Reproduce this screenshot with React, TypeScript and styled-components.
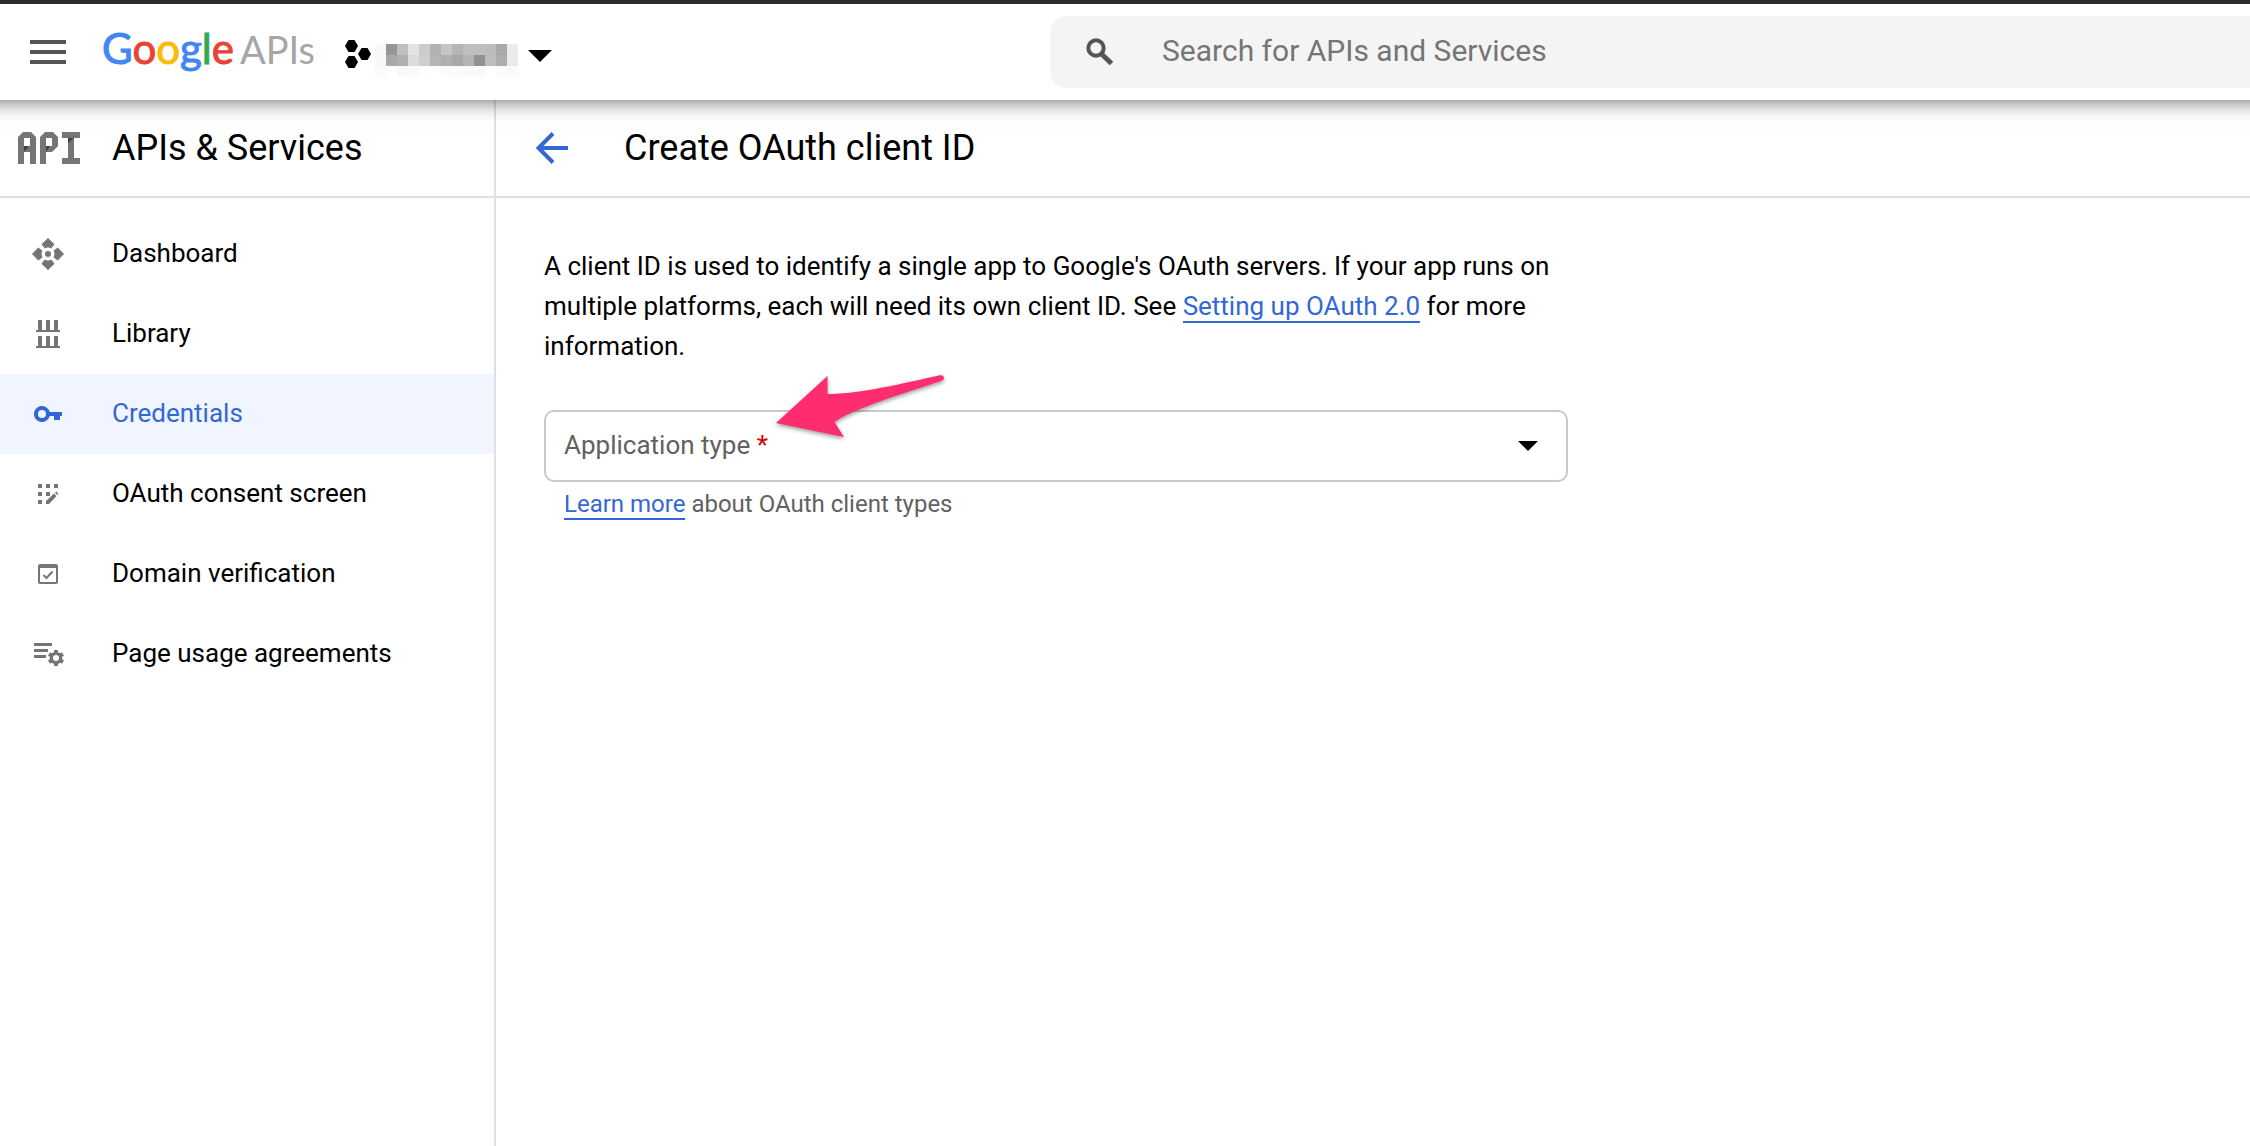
import React from "react";
import styled, { createGlobalStyle } from "styled-components";

const GlobalStyle = createGlobalStyle`
  *, *::before, *::after { box-sizing: border-box; }
  body {
    margin: 0;
    background: #fff;
    color: #000;
    font-family: Roboto, "Noto Sans", sans-serif;
    font-size: 26px;
    line-height: 40px;
  }
  button { border: 0; padding: 0; background: none; color: inherit; font: inherit; cursor: pointer; }
  svg { display: block; flex: none; }
`;

const Page = styled.div`
  display: flex;
  flex-direction: column;
  min-height: 100vh;
  overflow-x: clip;
`;

const Header = styled.header`
  position: relative;
  z-index: 1;
  display: grid;
  grid-template-columns: 7fr 8fr;
  align-items: center;
  height: 100px;
  border-top: 4px solid #2c2a32;
  background: #fff;
  box-shadow: 0 -20px 20px 20px rgba(0, 0, 0, 0.65);
`;

const HeaderStart = styled.div`
  display: flex;
  align-items: center;
  padding-left: 30px;
`;

const Logo = styled.a`
  display: flex;
  align-items: baseline;
  gap: 6px;
  margin: 0 30px 8px 36px;
  font-family: Lato, sans-serif;
  font-size: 42px;
  line-height: 48px;
  text-decoration: none;
`;

const Letter = styled.span<{ $color: string }>`
  color: ${(p) => p.$color};
  -webkit-text-stroke: 1px ${(p) => p.$color};
`;

const LogoSuffix = styled.span`
  color: #a6a6a6;
  font-size: 38px;
`;

const ProjectPicker = styled.button`
  display: flex;
  align-items: center;
`;

const SearchBar = styled.label`
  display: flex;
  align-items: center;
  gap: 48px;
  height: 72px;
  padding-left: 36px;
  border-radius: 16px 0 0 16px;
  background: #f4f4f4;
`;

const SearchInput = styled.input`
  flex: 1;
  min-width: 0;
  height: 68px;
  padding: 0 0 4px;
  border: 0;
  outline: 0;
  background: transparent;
  color: #333;
  font: 30px Roboto, sans-serif;
  &::placeholder { color: #757575; opacity: 1; }
`;

const Body = styled.div`
  display: flex;
  flex: 1;
`;

const Sidebar = styled.aside`
  flex: none;
  width: 496px;
  border-right: 2px solid #e0e0e0;
`;

const Main = styled.main`
  flex: 1;
  min-width: 0;
`;

const TitleBar = styled.div<{ $inset: number; $gap: number }>`
  display: flex;
  align-items: center;
  gap: ${(p) => p.$gap}px;
  height: 98px;
  padding-left: ${(p) => p.$inset}px;
  border-bottom: 2px solid #e0e0e0;
`;

const Title = styled.h1`
  margin: 0;
  font-size: 36px;
  font-weight: 400;
  line-height: 48px;
`;

const NavList = styled.ul`
  margin: 0;
  padding: 16px 0;
  list-style: none;
`;

const NavLink = styled.a<{ $active: boolean }>`
  display: flex;
  align-items: center;
  gap: 44px;
  height: 80px;
  padding-left: 28px;
  background: ${(p) => (p.$active ? "#f0f5ff" : "transparent")};
  color: ${(p) => (p.$active ? "#3367d6" : "#000")};
  text-decoration: none;
  svg { color: ${(p) => (p.$active ? "#3367d6" : "#757575")}; }
`;

const NavLabel = styled.span`
  padding-bottom: 2px;
`;

const Content = styled.div`
  max-width: 1120px;
  padding: 48px;
`;

const Intro = styled.p`
  margin: 0 0 44px;
`;

const TextLink = styled.a`
  border-bottom: 2px solid #3367d6;
  color: #3367d6;
  text-decoration: none;
`;

const Field = styled.div`
  position: relative;
`;

const Select = styled.select`
  display: block;
  width: 100%;
  height: 72px;
  padding: 0 64px 0 18px;
  border: 2px solid #c9c9c9;
  border-radius: 10px;
  background: #fff;
  color: #000;
  font: inherit;
  appearance: none;
`;

const FieldLabel = styled.label`
  position: absolute;
  top: 15px;
  left: 20px;
  color: #616161;
  pointer-events: none;
`;

const Required = styled.span`
  color: #d50000;
`;

const FieldCaret = styled.svg`
  position: absolute;
  top: 31px;
  right: 30px;
  pointer-events: none;
`;

const Pointer = styled.svg`
  position: absolute;
  top: -40px;
  left: 224px;
  overflow: visible;
  pointer-events: none;
  filter: drop-shadow(0 2px 2px rgba(0, 0, 0, 0.4));
`;

const Hint = styled.p`
  margin: 2px 20px 0;
  color: #616161;
  font-size: 24px;
`;

const MenuIcon = () => (
  <svg width="36" height="24" fill="#555" aria-hidden="true">
    <path d="M0 0h36v4H0zM0 10h36v4H0zM0 20h36v4H0z" />
  </svg>
);

const HexIcon = () => (
  <svg width="30" height="32" viewBox="0 -2 30 32" aria-hidden="true">
    <path d="M0 8l3.5-6h6l3.5 6-3.500 6h-6z" />
    <path d="M0 24l3.5-6h6l3.5 6-3.500 6h-6z" />
    <path d="M13 16l3.5-6h6l3.5 6-3.500 6h-6z" />
  </svg>
);

const MASK_ROWS = [
  ["f8", "96", "bf", "e3", "cb", "b2", "c6", "b5", "bf", "bf", "bc", "a9", "eb"],
  ["f8", "a9", "b0", "dc", "cf", "b5", "b0", "a8", "b4", "91", "bd", "ad", "eb"],
  ["fa", "ff", "f9", "fa", "fe", "ff", "fb", "fb", "f9", "fa", "ff", "fb", "fb"],
];

const MaskedName = () => (
  <svg width="153" height="50" shapeRendering="crispEdges" role="img" aria-label="Project">
    {MASK_ROWS.map((row, y) =>
      row.map((c, x) => (
        <rect key={`${x}-${y}`} x={x * 11} y={17 + y * 11} width="11" height="11" fill={`#${c}${c}${c}`} />
      ))
    )}
  </svg>
);

const SearchIcon = () => (
  <svg width="28" height="32" fill="none" stroke="#555" strokeWidth="4" aria-hidden="true">
    <circle cx="10" cy="12" r="7.7" />
    <path d="M15 17.500l10.500 10" strokeWidth="5" />
  </svg>
);

const ApiMark = () => (
  <svg width="62" height="32" fill="#757575" aria-hidden="true">
    <path d="M0 32V5l5-5h8l5 5v27h-6V20H6v12zM6 6v8h6V6z" fillRule="evenodd" />
    <path d="M22 32V5l5-5h8l5 5v9l-6 6h-6v12zM28 6v8h6V6z" fillRule="evenodd" />
    <path d="M44 0h18v6h-6v20h6v6H44v-6h6V6h-6z" />
    <path d="M6 14h5l-5 6zM28 14h4l-4 6zM50 6h6l-6 5z" fill="#424242" />
  </svg>
);

const BackIcon = () => (
  <svg width="32" height="32" fill="none" stroke="#3367d6" strokeWidth="4" aria-hidden="true">
    <path d="M17 1.500L2.500 16 17 30.500M3 16h29" />
  </svg>
);

const NavIcon = ({ children }: { children: React.ReactNode }) => (
  <svg width="40" height="40" fill="currentColor" aria-hidden="true">{children}</svg>
);

const DashboardIcon = () => (
  <NavIcon>
    <path d="M20 4l6.500 6.300-3.300 4.200a6.400 6.400 0 0 0-6.400 0l-3.300-4.200zM20 36l6.500-6.300-3.300-4.200a6.400 6.400 0 0 1-6.400 0l-3.300 4.200zM4 20l6.300-6.500 4.200 3.300a6.400 6.400 0 0 0 0 6.400l-4.200 3.300zM36 20l-6.300-6.500-4.200 3.300a6.400 6.400 0 0 1 0 6.400l4.200 3.300z" />
    <circle cx="20" cy="20" r="3" />
  </NavIcon>
);

const LibraryIcon = () => (
  <NavIcon>
    <path d="M10 6h4v10h4V6h4v10h4V6h4v10h2v2H8v-2h2zM10 22h4v10h4V22h4v10h4V22h4v10h2v2H8v-2h2z" />
  </NavIcon>
);

const KeyIcon = () => (
  <NavIcon>
    <path d="M21.7 18H34v4h-2v4h-6v-4h-4.300a8 8 0 1 1 0-4zM14 16a4 4 0 1 0 0 8 4 4 0 0 0 0-8z" fillRule="evenodd" />
  </NavIcon>
);

const ConsentIcon = () => (
  <NavIcon>
    <path d="M10 10h4v4h-4zM18 10h4v4h-4zM26 10h4v4h-4zM10 18h4v4h-4zM18 18h4v4h-4zM10 26h4v4h-4z" />
    <path d="M18 30v-3l8-7.500 2.600 2.600L21 30zM27 18.700l1.300-1.100 2.200 2.300-1.100 1.200z" />
  </NavIcon>
);

const VerifyIcon = () => (
  <NavIcon>
    <path d="M12 10h16a2 2 0 0 1 2 2v16a2 2 0 0 1-2 2H12a2 2 0 0 1-2-2V12a2 2 0 0 1 2-2zM12 14v14h16V14z" fillRule="evenodd" />
    <path d="M15.500 21l3 3 6-6.500" fill="none" stroke="currentColor" strokeWidth="2" />
  </NavIcon>
);

const AgreementsIcon = () => (
  <NavIcon>
    <path d="M6 9h18v3H6zM6 15h14v3H6zM6 21h12v3H6z" />
    <circle cx="28" cy="24" r="4.600" fill="none" stroke="currentColor" strokeWidth="3.200" />
    <path
      d="M28 16v3M28 29v3M21 20l2.600 1.500M32.400 26.500L35 28M21 28l2.600-1.500M32.400 21.500L35 20"
      fill="none"
      stroke="currentColor"
      strokeWidth="4"
    />
  </NavIcon>
);

const NAV = [
  { label: "Dashboard", Icon: DashboardIcon },
  { label: "Library", Icon: LibraryIcon },
  { label: "Credentials", Icon: KeyIcon, active: true },
  { label: "OAuth consent screen", Icon: ConsentIcon },
  { label: "Domain verification", Icon: VerifyIcon },
  { label: "Page usage agreements", Icon: AgreementsIcon },
];

const LOGO: [string, string][] = [
  ["G", "#4285f4"],
  ["o", "#ea4335"],
  ["o", "#fbbc05"],
  ["g", "#4285f4"],
  ["l", "#34a853"],
  ["e", "#ea4335"],
];

export default function App() {
  return (
    <Page>
      <GlobalStyle />
      <Header>
        <HeaderStart>
          <button type="button" aria-label="Navigation menu"><MenuIcon /></button>
          <Logo href="#home">
            <span>
              {LOGO.map(([char, color], i) => <Letter key={i} $color={color}>{char}</Letter>)}
            </span>
            <LogoSuffix>APIs</LogoSuffix>
          </Logo>
          <ProjectPicker type="button">
            <HexIcon />
            <MaskedName />
            <svg width="24" height="20" aria-hidden="true"><path d="M0 8h24L12 20z" /></svg>
          </ProjectPicker>
        </HeaderStart>
        <SearchBar>
          <SearchIcon />
          <SearchInput type="search" placeholder="Search for APIs and Services" aria-label="Search for APIs and Services" />
        </SearchBar>
      </Header>
      <Body>
        <Sidebar>
          <TitleBar $inset={18} $gap={32}>
            <ApiMark />
            <Title as="h2">APIs &amp; Services</Title>
          </TitleBar>
          <nav aria-label="APIs and Services">
            <NavList>
              {NAV.map(({ label, Icon, active }) => (
                <li key={label}>
                  <NavLink href="#nav" $active={!!active} aria-current={active ? "page" : undefined}>
                    <Icon />
                    <NavLabel>{label}</NavLabel>
                  </NavLink>
                </li>
              ))}
            </NavList>
          </nav>
        </Sidebar>
        <Main>
          <TitleBar $inset={40} $gap={56}>
            <button type="button" aria-label="Back"><BackIcon /></button>
            <Title>Create OAuth client ID</Title>
          </TitleBar>
          <Content>
            <Intro>
              A client ID is used to identify a single app to Google's OAuth servers. If your app runs on
              multiple platforms, each will need its own client ID. See{" "}
              <TextLink href="#oauth">Setting up OAuth 2.0</TextLink> for more information.
            </Intro>
            <Field>
              <Select id="application-type" required defaultValue="">
                <option value="" />
              </Select>
              <FieldLabel htmlFor="application-type">
                Application type <Required>*</Required>
              </FieldLabel>
              <FieldCaret width="20" height="10" aria-hidden="true"><path d="M0 0h20L10 10z" /></FieldCaret>
              <Pointer width="180" height="80" fill="#ff2d6f" aria-hidden="true">
                <path d="M8 53L59.500 6v18C92 24 136 13 172 5.200q3.500-.4 4 2.300 0 2.500-3 3.500C136 23 82 40 66.500 52l9.500 15z" />
              </Pointer>
            </Field>
            <Hint><TextLink href="#types">Learn more</TextLink> about OAuth client types</Hint>
          </Content>
        </Main>
      </Body>
    </Page>
  );
}
